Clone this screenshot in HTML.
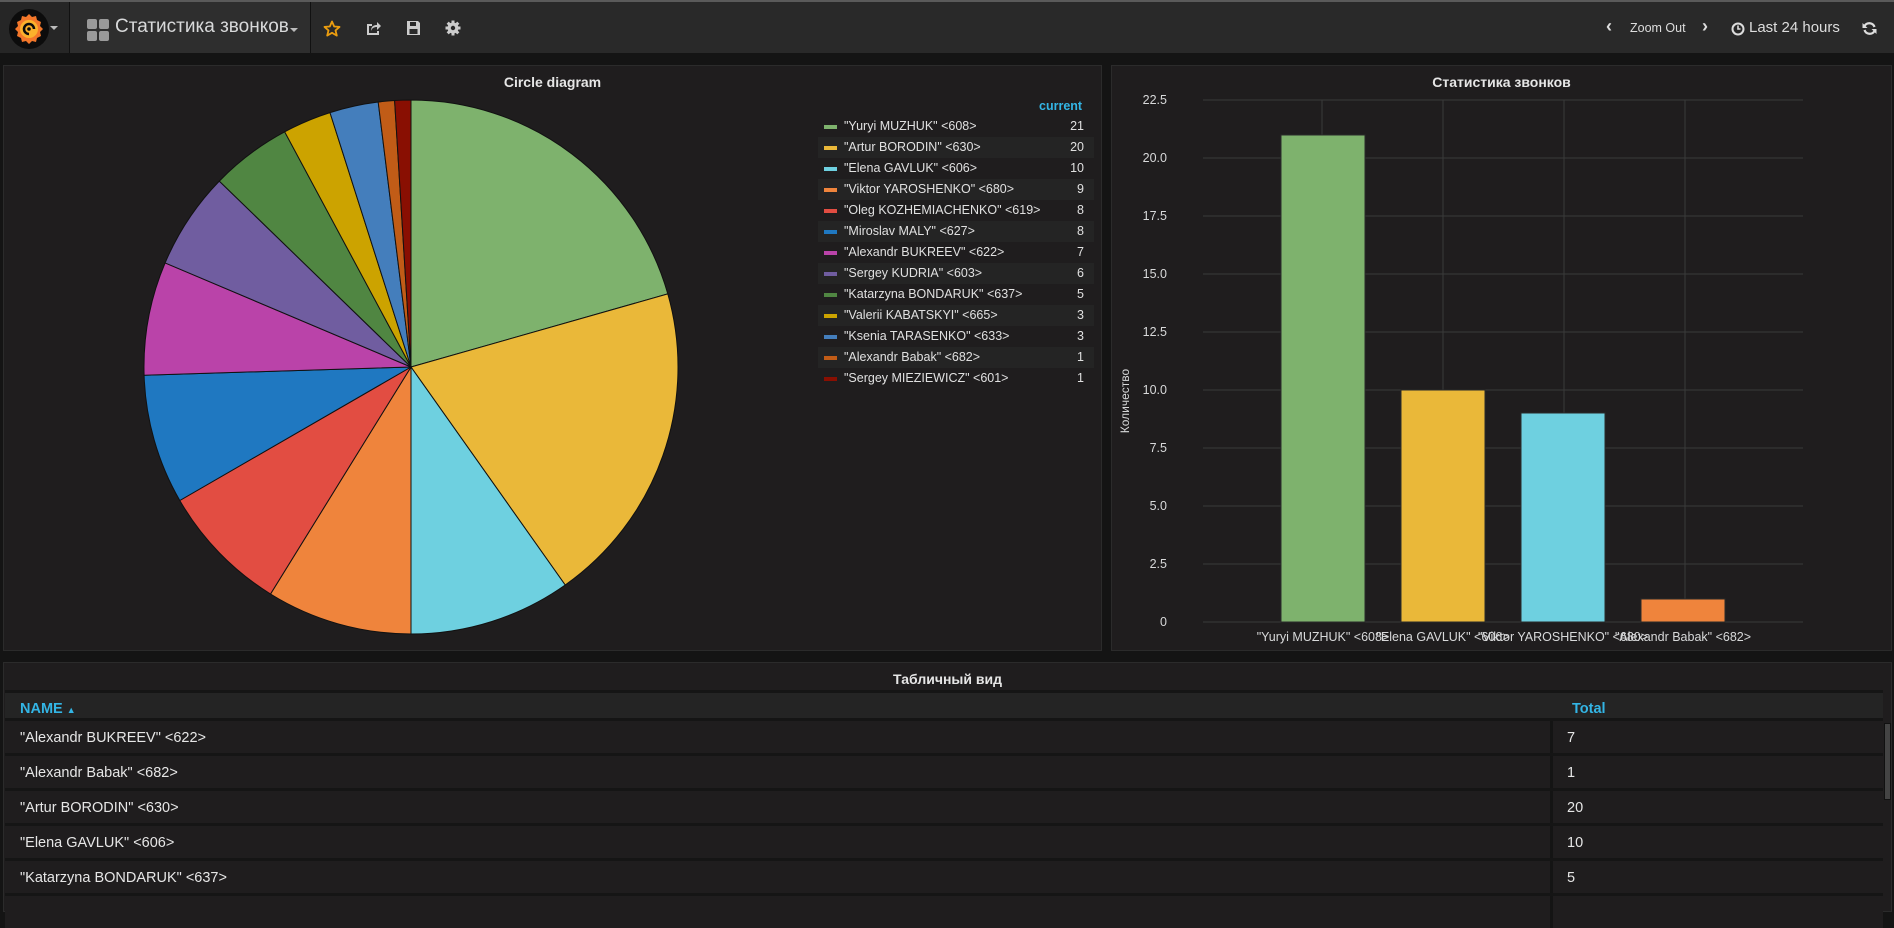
<!DOCTYPE html>
<html><head><meta charset="utf-8"><style>
*{margin:0;padding:0;box-sizing:border-box}
body{width:1894px;height:904px;overflow:hidden;background:#141414;font-family:"Liberation Sans",sans-serif;color:#d8d9da;position:relative}
.nav{position:absolute;left:0;top:0;width:1894px;height:53px;background:#292929;border-top:2px solid #5a5a5a}
.abs{position:absolute}
.panel{position:absolute;background:#1f1d1e;border:1px solid #2b2b2b}
.ptitle{position:absolute;left:0;right:0;text-align:center;font-weight:bold;font-size:14px;color:#e6e6e6}
.lg{position:absolute;left:818px;width:276px;height:21px;font-size:12.5px;color:#e0e0e0}
.lg .sw{position:absolute;left:6px;top:9px;width:13px;height:4px}
.lg .t{position:absolute;left:26px;top:3px;white-space:nowrap}
.lg .v{position:absolute;right:10px;top:3px}
.row{position:absolute;left:5px;width:1878px;height:32px;background:#1f1d1e;font-size:14.5px;color:#e6e6e6}
.row .n{position:absolute;left:15px;top:9px}
.row .c{position:absolute;left:1562px;top:9px}
.row .d{position:absolute;left:1545px;top:0;width:3px;height:32px;background:#141414}
</style></head><body>
<div class="nav">
 <div class="abs" style="left:0;top:0;width:69px;height:51px;background:#262626"></div>
 <div class="abs" style="left:69px;top:0;width:242px;height:51px;background:#2e2e2e;border-left:1px solid #111;border-right:1px solid #111"></div>
 <svg class="abs" style="left:7px;top:5px" width="44" height="44" viewBox="0 0 44 44">
  <circle cx="22" cy="22" r="20" fill="#0c0c0c"/>
  <path d="M22 7l3 3 4-1 1 4 4 2-1 4 3 3-3 3 1 4-4 2-1 4-4-1-3 3-3-3-4 1-1-4-4-2 1-4-3-3 3-3-1-4 4-2 1-4 4 1z" fill="#f3772a"/>
  <circle cx="22" cy="22" r="9" fill="#fbb12c"/>
  <path d="M22 27a5 5 0 1 1 5-5" stroke="#0c0c0c" stroke-width="2.5" fill="none"/>
  <circle cx="22" cy="22" r="1.8" fill="#0c0c0c"/>
 </svg>
 <div class="abs" style="left:50px;top:24px;border:4px solid transparent;border-top:4px solid #bbb"></div>
 <svg class="abs" style="left:87px;top:17px" width="22" height="22"><rect x="0" y="0" width="10" height="10" rx="2" fill="#9a9a9a"/><rect x="12" y="0" width="10" height="10" rx="2" fill="#9a9a9a"/><rect x="0" y="12" width="10" height="10" rx="2" fill="#9a9a9a"/><rect x="12" y="12" width="10" height="10" rx="2" fill="#9a9a9a"/></svg>
 <div class="abs" style="left:115px;top:14px;font-size:19px;color:#d8d9da">Статистика звонков</div>
 <div class="abs" style="left:290px;top:26px;border:4px solid transparent;border-top:4px solid #bbb"></div>
 <svg class="abs" style="left:323px;top:18px" width="18" height="18" viewBox="0 0 18 18"><path d="M9 1.5l2.2 5 5.3.4-4 3.5 1.3 5.2L9 12.8l-4.8 2.8 1.3-5.2-4-3.5 5.3-.4z" fill="none" stroke="#eb9d0f" stroke-width="1.8" stroke-linejoin="round"/></svg>
 <svg class="abs" style="left:365px;top:18px" width="16" height="16" viewBox="0 0 16 16"><path d="M2 4h5v2H4v7h8v-2h2v4H2z" fill="#ccc"/><path d="M6 11c0-5 3-6 6-6V2l4 4-4 4V7c-3 0-5 1-6 4z" fill="#ccc"/></svg>
 <svg class="abs" style="left:406px;top:18px" width="15" height="16" viewBox="0 0 15 16"><path d="M1 1h11l2 2v12H1z" fill="#ccc"/><rect x="4" y="2" width="6" height="4" fill="#292929"/><rect x="3.5" y="9" width="8" height="5" fill="#292929"/></svg>
 <svg class="abs" style="left:445px;top:18px" width="16" height="16" viewBox="0 0 16 16"><g fill="#ccc"><circle cx="8" cy="8" r="5.5"/><rect x="6.5" y="0.5" width="3" height="15"/><rect x="0.5" y="6.5" width="15" height="3"/><rect x="6.5" y="0.5" width="3" height="15" transform="rotate(45 8 8)"/><rect x="6.5" y="0.5" width="3" height="15" transform="rotate(-45 8 8)"/></g><circle cx="8" cy="8" r="2.2" fill="#292929"/></svg>
 <div class="abs" style="left:1606px;top:14px;font-size:18px;font-weight:bold;color:#ddd">&#x2039;</div>
 <div class="abs" style="left:1630px;top:19px;font-size:12.5px;color:#ddd">Zoom Out</div>
 <div class="abs" style="left:1702px;top:14px;font-size:18px;font-weight:bold;color:#ddd">&#x203A;</div>
 <svg class="abs" style="left:1731px;top:20px" width="14" height="14"><circle cx="7" cy="7" r="5.5" fill="none" stroke="#ddd" stroke-width="2"/><path d="M7 3.5V7h2.5" stroke="#ddd" stroke-width="1.6" fill="none"/></svg>
 <div class="abs" style="left:1749px;top:17px;font-size:15px;color:#ddd">Last 24 hours</div>
 <svg class="abs" style="left:1862px;top:19px" width="15" height="15" viewBox="0 0 15 15"><path d="M12.5 6A5.5 5.5 0 0 0 2.5 5" stroke="#ddd" stroke-width="2.2" fill="none"/><path d="M0.5 2v5h5z" fill="#ddd"/><path d="M2.5 9a5.5 5.5 0 0 0 10 1" stroke="#ddd" stroke-width="2.2" fill="none"/><path d="M14.5 13V8h-5z" fill="#ddd"/></svg>
</div>

<div class="panel" style="left:3px;top:65px;width:1099px;height:586px">
 <div class="ptitle" style="top:8px">Circle diagram</div>
</div>
<svg class="abs" style="left:0;top:0" width="1110" height="660">
 <g stroke="#111" stroke-width="1">
 <path d="M411 367L411 100A267 267 0 0 1 667.8 293.9Z" fill="#7eb26d"/>
 <path d="M411 367L667.8 293.9A267 267 0 0 1 565.2 585Z" fill="#eab839"/>
 <path d="M411 367L565.2 585A267 267 0 0 1 411 634Z" fill="#6ed0e0"/>
 <path d="M411 367L411 634A267 267 0 0 1 270.5 594Z" fill="#ef843c"/>
 <path d="M411 367L270.5 594A267 267 0 0 1 179.8 500.5Z" fill="#e24d42"/>
 <path d="M411 367L179.8 500.5A267 267 0 0 1 144.1 375.2Z" fill="#1f78c1"/>
 <path d="M411 367L144.1 375.2A267 267 0 0 1 165.1 262.9Z" fill="#ba43a9"/>
 <path d="M411 367L165.1 262.9A267 267 0 0 1 219.3 181.1Z" fill="#705da0"/>
 <path d="M411 367L219.3 181.1A267 267 0 0 1 284.7 131.8Z" fill="#508642"/>
 <path d="M411 367L284.7 131.8A267 267 0 0 1 330 112.6Z" fill="#cca300"/>
 <path d="M411 367L330 112.6A267 267 0 0 1 378.2 102Z" fill="#447ebc"/>
 <path d="M411 367L378.2 102A267 267 0 0 1 394.6 100.5Z" fill="#c15c17"/>
 <path d="M411 367L394.6 100.5A267 267 0 0 1 411 100Z" fill="#890f02"/>
 </g>
</svg>
<div class="abs" style="left:1039px;top:99px;font-size:12.5px;font-weight:bold;color:#33b5e5">current</div>
<div class="lg" style="top:116px"><div class="sw" style="background:#7eb26d"></div><div class="t">"Yuryi MUZHUK" &lt;608&gt;</div><div class="v">21</div></div>
<div class="lg" style="top:137px;background:#242424"><div class="sw" style="background:#eab839"></div><div class="t">"Artur BORODIN" &lt;630&gt;</div><div class="v">20</div></div>
<div class="lg" style="top:158px"><div class="sw" style="background:#6ed0e0"></div><div class="t">"Elena GAVLUK" &lt;606&gt;</div><div class="v">10</div></div>
<div class="lg" style="top:179px;background:#242424"><div class="sw" style="background:#ef843c"></div><div class="t">"Viktor YAROSHENKO" &lt;680&gt;</div><div class="v">9</div></div>
<div class="lg" style="top:200px"><div class="sw" style="background:#e24d42"></div><div class="t">"Oleg KOZHEMIACHENKO" &lt;619&gt;</div><div class="v">8</div></div>
<div class="lg" style="top:221px;background:#242424"><div class="sw" style="background:#1f78c1"></div><div class="t">"Miroslav MALY" &lt;627&gt;</div><div class="v">8</div></div>
<div class="lg" style="top:242px"><div class="sw" style="background:#ba43a9"></div><div class="t">"Alexandr BUKREEV" &lt;622&gt;</div><div class="v">7</div></div>
<div class="lg" style="top:263px;background:#242424"><div class="sw" style="background:#705da0"></div><div class="t">"Sergey KUDRIA" &lt;603&gt;</div><div class="v">6</div></div>
<div class="lg" style="top:284px"><div class="sw" style="background:#508642"></div><div class="t">"Katarzyna BONDARUK" &lt;637&gt;</div><div class="v">5</div></div>
<div class="lg" style="top:305px;background:#242424"><div class="sw" style="background:#cca300"></div><div class="t">"Valerii KABATSKYI" &lt;665&gt;</div><div class="v">3</div></div>
<div class="lg" style="top:326px"><div class="sw" style="background:#447ebc"></div><div class="t">"Ksenia TARASENKO" &lt;633&gt;</div><div class="v">3</div></div>
<div class="lg" style="top:347px;background:#242424"><div class="sw" style="background:#c15c17"></div><div class="t">"Alexandr Babak" &lt;682&gt;</div><div class="v">1</div></div>
<div class="lg" style="top:368px"><div class="sw" style="background:#890f02"></div><div class="t">"Sergey MIEZIEWICZ" &lt;601&gt;</div><div class="v">1</div></div>

<div class="panel" style="left:1111px;top:65px;width:781px;height:586px">
 <div class="ptitle" style="top:8px">Статистика звонков</div>
</div>
<svg class="abs" style="left:1111px;top:65px" width="781" height="586" font-family="Liberation Sans, sans-serif">
 <g stroke="#3a3a3a" stroke-width="1">
  <line x1="92" y1="35" x2="692" y2="35"/><line x1="92" y1="93" x2="692" y2="93"/><line x1="92" y1="151" x2="692" y2="151"/><line x1="92" y1="209" x2="692" y2="209"/><line x1="92" y1="267" x2="692" y2="267"/><line x1="92" y1="325" x2="692" y2="325"/><line x1="92" y1="383" x2="692" y2="383"/><line x1="92" y1="441" x2="692" y2="441"/><line x1="92" y1="499" x2="692" y2="499"/><line x1="92" y1="557" x2="692" y2="557"/>
  <line x1="211" y1="35" x2="211" y2="557"/><line x1="332" y1="35" x2="332" y2="557"/><line x1="453" y1="35" x2="453" y2="557"/><line x1="574" y1="35" x2="574" y2="557"/>
 </g>
 <g stroke="#2a2a2a" stroke-width="1">
  <rect x="170" y="70" width="84" height="487" fill="#7eb26d"/>
  <rect x="290" y="325" width="84" height="232" fill="#eab839"/>
  <rect x="410" y="348" width="84" height="209" fill="#6ed0e0"/>
  <rect x="530" y="534" width="84" height="23" fill="#ef843c"/>
 </g>
 <g fill="#d8d9da" font-size="12.5" text-anchor="end">
  <text x="56" y="39">22.5</text><text x="56" y="97">20.0</text><text x="56" y="155">17.5</text><text x="56" y="213">15.0</text><text x="56" y="271">12.5</text><text x="56" y="329">10.0</text><text x="56" y="387">7.5</text><text x="56" y="445">5.0</text><text x="56" y="503">2.5</text><text x="56" y="561">0</text>
 </g>
 <text transform="translate(18 336) rotate(-90)" fill="#d8d9da" font-size="12" text-anchor="middle">Количество</text>
 <g fill="#d8d9da" font-size="12.5" text-anchor="middle">
  <text x="212" y="576">"Yuryi MUZHUK" &lt;608&gt;</text><text x="332" y="576">"Elena GAVLUK" &lt;606&gt;</text><text x="452" y="576">"Viktor YAROSHENKO" &lt;680&gt;</text><text x="572" y="576">"Alexandr Babak" &lt;682&gt;</text>
 </g>
</svg>

<div class="panel" style="left:3px;top:662px;width:1889px;height:250px">
 <div class="ptitle" style="top:8px">Табличный вид</div>
</div>
<div class="abs" style="left:5px;top:690px;width:1878px;height:220px;background:#151515"></div>
<div class="abs" style="left:5px;top:693px;width:1878px;height:25px;background:#242424"></div>
<div class="abs" style="left:20px;top:701px;font-size:14.5px;font-weight:bold;color:#33b5e5">NAME <span style="font-size:9px">&#9650;</span></div>
<div class="abs" style="left:1572px;top:701px;font-size:14.5px;font-weight:bold;color:#33b5e5">Total</div>
<div class="row" style="top:721px"><div class="n">"Alexandr BUKREEV" &lt;622&gt;</div><div class="d"></div><div class="c">7</div></div>
<div class="row" style="top:756px"><div class="n">"Alexandr Babak" &lt;682&gt;</div><div class="d"></div><div class="c">1</div></div>
<div class="row" style="top:791px"><div class="n">"Artur BORODIN" &lt;630&gt;</div><div class="d"></div><div class="c">20</div></div>
<div class="row" style="top:826px"><div class="n">"Elena GAVLUK" &lt;606&gt;</div><div class="d"></div><div class="c">10</div></div>
<div class="row" style="top:861px"><div class="n">"Katarzyna BONDARUK" &lt;637&gt;</div><div class="d"></div><div class="c">5</div></div>
<div class="row" style="top:896px"><div class="d"></div></div>
<div class="abs" style="left:1884px;top:723px;width:7px;height:77px;background:#444;border:1px solid #111"></div>
</body></html>
